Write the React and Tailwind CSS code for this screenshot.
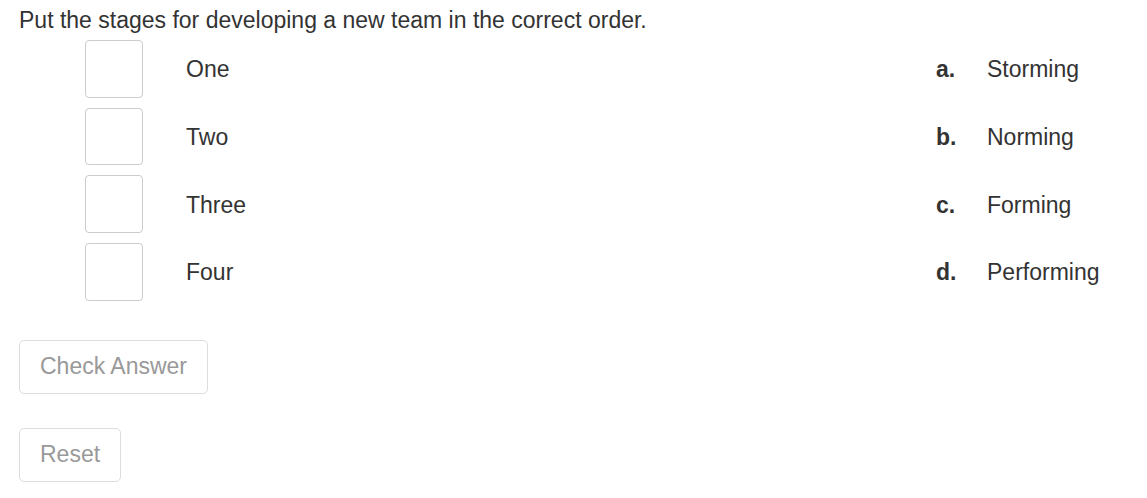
export default function App() {
  const left = ["One", "Two", "Three", "Four"]
  const right = [
    ["a.", "Storming"],
    ["b.", "Norming"],
    ["c.", "Forming"],
    ["d.", "Performing"],
  ]

  return (
    <div className="min-h-[498px] bg-white px-[19px] pt-[4px] font-['Liberation_Sans',Arial,sans-serif] text-[23px] text-[#333]">
      <p className="leading-[32px]">Put the stages for developing a new team in the correct order.</p>

      <div className="mt-[4px] flex">
        {/* Left side - drop boxes */}
        <div className="flex flex-1 flex-col gap-[10px] pl-[66px]">
          {left.map((label) => (
            <div key={label} className="flex h-[57.67px] items-center">
              <div className="h-[57.67px] w-[58px] rounded-[4px] border border-[#ccc] bg-white" />
              <span className="ml-[43px] pt-[2px] leading-none">{label}</span>
            </div>
          ))}
        </div>

        {/* Right side - options */}
        <div className="flex w-[192px] flex-col gap-[10px]">
          {right.map(([letter, word]) => (
            <div key={letter} className="flex h-[57.67px] items-center pt-[2px]">
              <span className="w-[51px] font-bold leading-none">{letter}</span>
              <span className="leading-none">{word}</span>
            </div>
          ))}
        </div>
      </div>

      <div className="mt-[39px] flex flex-col items-start gap-[34px]">
        <button className="h-[54px] rounded-[5px] border border-[#ddd] bg-white px-[20px] text-[#999]">
          Check Answer
        </button>
        <button className="h-[54px] rounded-[5px] border border-[#ddd] bg-white px-[20px] text-[#999]">
          Reset
        </button>
      </div>
    </div>
  )
}
